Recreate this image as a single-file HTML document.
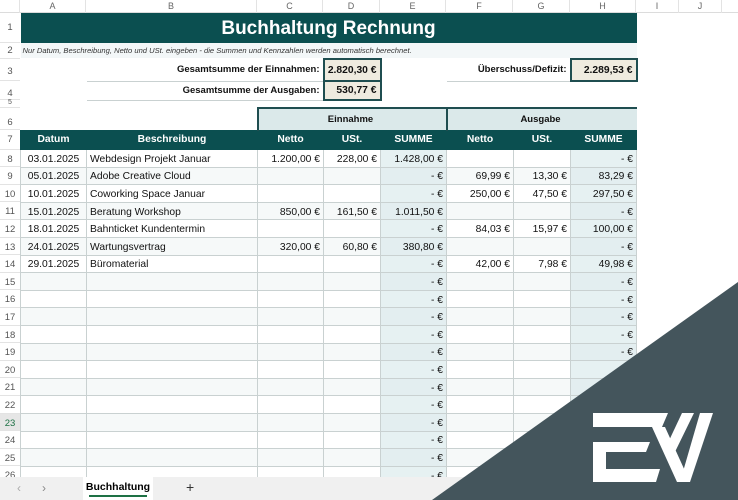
<!DOCTYPE html>
<html><head><meta charset="utf-8"><style>
*{margin:0;padding:0;box-sizing:border-box}
body{width:738px;height:500px;overflow:hidden;background:#fff;font-family:"Liberation Sans",Calibri,sans-serif;position:relative}
.colh{position:absolute;top:0;left:0;height:13px;width:738px;background:#fff;border-bottom:1px solid #dcdcdc}
.colh div{position:absolute;top:0;height:13px;font-size:9px;color:#666;text-align:center;line-height:13px;border-right:1px solid #e3e3e3}
.rowh{position:absolute;left:0;width:20px;font-size:9.5px;color:#555;text-align:center;border-bottom:1px solid #e3e3e3}
table{position:absolute;left:20px;top:13px;border-collapse:collapse;table-layout:fixed;font-size:10.3px;color:#111}
td{padding:0 3px;white-space:nowrap;overflow:hidden;height:17.6px;vertical-align:middle}
.t td.g{border:1px solid #c9d1d1;padding-top:2px}
.r{text-align:right}
.s{background:#e6f1f2}
.alt td.g{background:#f6f9f9}
.alt td.g.s{background:#e3eef0}
.hd td{background:#0b4f50;color:#fff;font-weight:bold;text-align:center;border:1px solid #0b4f50}
.bx{background:#efebdf;border:2px solid #1f4e50 !important;font-weight:bold;text-align:right}
.tabs{position:absolute;left:0;top:477px;width:738px;height:23px;background:#f0f0f0}
</style></head><body>
<div class="colh">
<div style="left:0;width:20px"></div>
<div style="left:20px;width:66px">A</div><div style="left:86px;width:171px">B</div><div style="left:257px;width:66px">C</div><div style="left:323px;width:57px">D</div><div style="left:380px;width:66px">E</div><div style="left:446px;width:67px">F</div><div style="left:513px;width:57px">G</div><div style="left:570px;width:66px">H</div><div style="left:636px;width:43px">I</div><div style="left:679px;width:43px">J</div>
</div>
<div class="rowh" style="top:13px;height:30px;line-height:30px">1</div>
<div class="rowh" style="top:43px;height:16px;line-height:16px">2</div>
<div class="rowh" style="top:59px;height:22px;line-height:26px">3</div>
<div class="rowh" style="top:81px;height:19px;line-height:26px">4</div>
<div class="rowh" style="top:100px;height:8px;line-height:6px;font-size:7px">5</div>
<div class="rowh" style="top:108px;height:22px;line-height:30px">6</div>
<div class="rowh" style="top:130px;height:19.6px;line-height:20px">7</div>
<div id="rn"></div>
<table class="t">
<colgroup><col style="width:66px"><col style="width:171px"><col style="width:66px"><col style="width:57px"><col style="width:66px"><col style="width:67px"><col style="width:57px"><col style="width:66px"></colgroup>
<tr><td colspan="8" style="height:30px;background:#0b4f50;color:#fff;font-weight:bold;font-size:19px;text-align:center;padding-top:2px">Buchhaltung Rechnung</td></tr>
<tr><td colspan="8" style="height:16px;background:#f3f7f8;font-style:italic;font-size:7.6px;color:#333;padding-left:2px">Nur Datum, Beschreibung, Netto und USt. eingeben - die Summen und Kennzahlen werden automatisch berechnet.</td></tr>
<tr><td style="height:22px"></td><td colspan="2" class="r" style="font-weight:bold;font-size:9.5px;border-bottom:1px solid #c9d1d1">Gesamtsumme der Einnahmen:</td><td class="bx">2.820,30 €</td><td></td><td colspan="2" class="r" style="font-weight:bold;font-size:9.5px;border-bottom:1px solid #c9d1d1">Überschuss/Defizit:</td><td class="bx">2.289,53 €</td></tr>
<tr><td style="height:19px"></td><td colspan="2" class="r" style="font-weight:bold;font-size:9.5px;border-bottom:1px solid #c9d1d1">Gesamtsumme der Ausgaben:</td><td class="bx">530,77 €</td><td colspan="4"></td></tr>
<tr><td colspan="8" style="height:8px"></td></tr>
<tr><td colspan="2" style="height:22px"></td><td colspan="3" style="background:#dbe9ea;border-top:2px solid #1f4e50;border-left:2px solid #1f4e50;text-align:center;font-weight:bold;font-size:9.5px;padding-left:0">Einnahme</td><td colspan="3" style="background:#dbe9ea;border-top:2px solid #1f4e50;border-left:2px solid #1f4e50;text-align:center;font-weight:bold;font-size:9.5px;padding-left:0">Ausgabe</td></tr>
<tr class="hd"><td style="height:19.6px">Datum</td><td>Beschreibung</td><td>Netto</td><td>USt.</td><td>SUMME</td><td>Netto</td><td>USt.</td><td>SUMME</td></tr>
<tbody id="tb"></tbody>
</table>
<div class="tabs">
<span style="position:absolute;left:17px;top:4px;color:#aaa;font-size:12px">&#8249;</span>
<span style="position:absolute;left:42px;top:4px;color:#888;font-size:12px">&#8250;</span>
<div style="position:absolute;left:83px;top:0;width:70px;height:23px;background:#fff;font-weight:bold;font-size:10.5px;text-align:center;line-height:20px">Buchhaltung<div style="position:absolute;left:6px;right:6px;bottom:3px;height:2px;background:#1e7145"></div></div>
<span style="position:absolute;left:186px;top:2px;color:#333;font-size:14px">+</span>
</div>
<svg style="position:absolute;left:0;top:0" width="738" height="500">
<polygon points="432,500 738,282 738,500" fill="#44555c"/>
<g fill="#fff">
<polygon points="593,413 668,413 662,427 593,427"/>
<polygon points="593,442 650,442 646,452 606,452 606,469 660,469 656,482 593,482"/>
<polygon points="652,427 665,427 690,482 677,482"/>
<polygon points="700,413 713,413 690,482 680,482"/>
<polygon points="682,413 694,413 672,458 666,447"/>
</g>
</svg>
<script>
var d=[["03.01.2025","Webdesign Projekt Januar","1.200,00 €","228,00 €","1.428,00 €","","","- €"],
["05.01.2025","Adobe Creative Cloud","","","- €","69,99 €","13,30 €","83,29 €"],
["10.01.2025","Coworking Space Januar","","","- €","250,00 €","47,50 €","297,50 €"],
["15.01.2025","Beratung Workshop","850,00 €","161,50 €","1.011,50 €","","","- €"],
["18.01.2025","Bahnticket Kundentermin","","","- €","84,03 €","15,97 €","100,00 €"],
["24.01.2025","Wartungsvertrag","320,00 €","60,80 €","380,80 €","","","- €"],
["29.01.2025","Büromaterial","","","- €","42,00 €","7,98 €","49,98 €"]];
while(d.length<19)d.push(["","","","","- €","","","- €"]);
var h="",rn="";
d.forEach(function(r,i){h+='<tr class="'+(i%2?'alt':'')+'">';
r.forEach(function(c,j){var cl='g'+(j>1?' r':'')+(j==4||j==7?' s':'');h+='<td class="'+cl+'"'+(j==0?' style="text-align:center"':'')+'>'+c+'</td>'});h+='</tr>';
var y=149.6+i*17.6;rn+='<div class="rowh" style="top:'+y+'px;height:17.6px;line-height:20px'+(i==15?';background:#e6e6e6;color:#1e7145':'')+'">'+(i+8)+'</div>'});
document.getElementById('tb').innerHTML=h;document.getElementById('rn').innerHTML=rn;
</script>
</body></html>
